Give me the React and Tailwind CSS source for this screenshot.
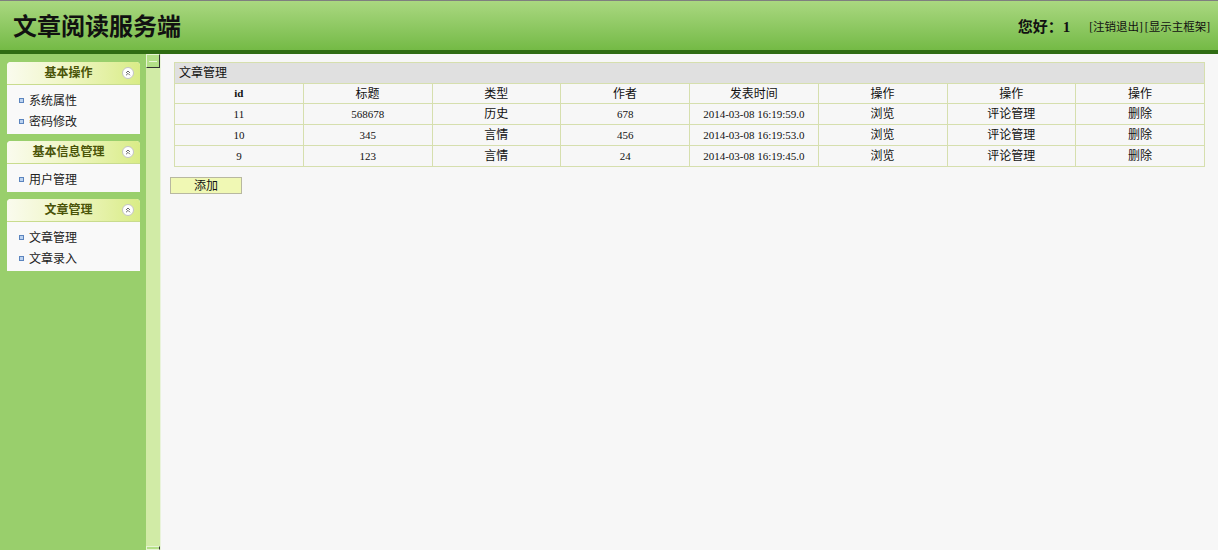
import React from 'react';
import { ChevronsUp } from 'lucide-react';

const FONT = { fontFamily: '"Liberation Serif", "Noto Sans CJK SC", serif' };

const MENUS = [
  { title: '基本操作', items: ['系统属性', '密码修改'] },
  { title: '基本信息管理', items: ['用户管理'] },
  { title: '文章管理', items: ['文章管理', '文章录入'] },
];

const COLUMNS = ['id', '标题', '类型', '作者', '发表时间', '操作', '操作', '操作'];

const ARTICLES = [
  { id: 11, title: '568678', type: '历史', author: '678', time: '2014-03-08 16:19:59.0' },
  { id: 10, title: '345', type: '言情', author: '456', time: '2014-03-08 16:19:53.0' },
  { id: 9, title: '123', type: '言情', author: '24', time: '2014-03-08 16:19:45.0' },
];

const MenuPanel = ({ title, items }) => (
  <div className="w-[133px] overflow-hidden rounded-t-[4px] bg-[#f9f9f9]">
    <div className="flex h-[23px] items-center border-b border-[#c9dc8e] bg-gradient-to-r from-[#fafbee] via-[#eef5c0] to-[#d9ec86] pl-2 pr-[6px]">
      <span className="flex-1 text-center text-[12px] font-bold text-[#4a5408]">{title}</span>
      <span className="flex h-[12px] w-[12px] items-center justify-center rounded-full border border-[#c4c4c4] bg-white">
        <ChevronsUp size={8} strokeWidth={3} className="text-[#666]" />
      </span>
    </div>
    <ul className="pb-[2px] pt-[5px]">
      {items.map((item) => (
        <li key={item} className="flex h-[21px] items-center gap-[5px] pl-[12px] text-[12px] text-[#222]">
          <span className="h-[5px] w-[5px] border border-[#5b84be] bg-[#bcd3f0]" />
          {item}
        </li>
      ))}
    </ul>
  </div>
);

export default function App() {
  return (
    <div className="flex h-[550px] w-[1218px] flex-col overflow-hidden bg-[#f7f7f7]" style={FONT}>
      {/* top banner */}
      <header className="flex h-[54px] shrink-0 items-center justify-between border-t border-[#7f7f7f] border-b-[4px] border-b-[#2f6c13] bg-gradient-to-b from-[#aad880] to-[#74ba45] pl-[13px] pr-[8px]">
        <h1 className="pt-[2px] text-[24px] font-bold leading-none text-[#111]">文章阅读服务端</h1>
        <div className="flex items-center pt-[4px] text-[11.5px] text-[#111]">
          <span className="mr-[19px] text-[15px] font-bold">您好：1</span>
          <span>[注销退出]</span>
          <span className="ml-[2px]">[显示主框架]</span>
        </div>
      </header>

      <div className="flex flex-1">
        {/* left menu */}
        <aside className="flex w-[146px] shrink-0 flex-col gap-[7px] bg-[#99cf6c] pl-[7px] pt-[8px]">
          {MENUS.map((menu) => (
            <MenuPanel key={menu.title} {...menu} />
          ))}
        </aside>

        {/* splitter */}
        <div className="flex w-[15px] shrink-0 flex-col justify-between border-r border-[#e9f3da] bg-[#d1eba6]">
          <div className="flex h-[14px] items-center justify-center border border-[#e6f4d2] border-b-[#333] border-r-[#333] bg-[#b3df87]">
            <span className="h-px w-[8px] bg-[#e8f6d8]" />
          </div>
          <div className="h-[4px] border border-[#e6f4d2] border-r-[#333] bg-[#b3df87]" />
        </div>

        {/* main content */}
        <main className="flex-1 pl-[9px] pt-[8px]">
          <table className="ml-[4px] w-[1031px] table-fixed border-collapse text-[12px] text-[#111]">
            <thead>
              <tr>
                <th colSpan={8} className="h-[21px] border border-[#d6dfae] bg-[#e0e0e0] pl-[4px] text-left font-normal">
                  文章管理
                </th>
              </tr>
              <tr>
                {COLUMNS.map((col, i) => (
                  <th key={i} className={`h-[20px] border border-[#d6dfae] text-center ${i === 0 ? 'text-[11px] font-bold' : 'font-normal'}`}>
                    {col}
                  </th>
                ))}
              </tr>
            </thead>
            <tbody>
              {ARTICLES.map((row) => (
                <tr key={row.id} className="text-center">
                  <td className="h-[21px] border border-[#d6dfae] text-[11px]">{row.id}</td>
                  <td className="border border-[#d6dfae] text-[11px]">{row.title}</td>
                  <td className="border border-[#d6dfae]">{row.type}</td>
                  <td className="border border-[#d6dfae] text-[11px]">{row.author}</td>
                  <td className="border border-[#d6dfae] text-[11px]">{row.time}</td>
                  <td className="border border-[#d6dfae]">浏览</td>
                  <td className="border border-[#d6dfae]">评论管理</td>
                  <td className="border border-[#d6dfae]">删除</td>
                </tr>
              ))}
            </tbody>
          </table>

          <button
            type="button"
            className="mt-[10px] flex h-[17px] w-[72px] items-center justify-center border border-[#b8b8a0] bg-[#f0f8b4] text-[12px] text-[#111]"
          >
            添加
          </button>
        </main>
      </div>
    </div>
  );
}
